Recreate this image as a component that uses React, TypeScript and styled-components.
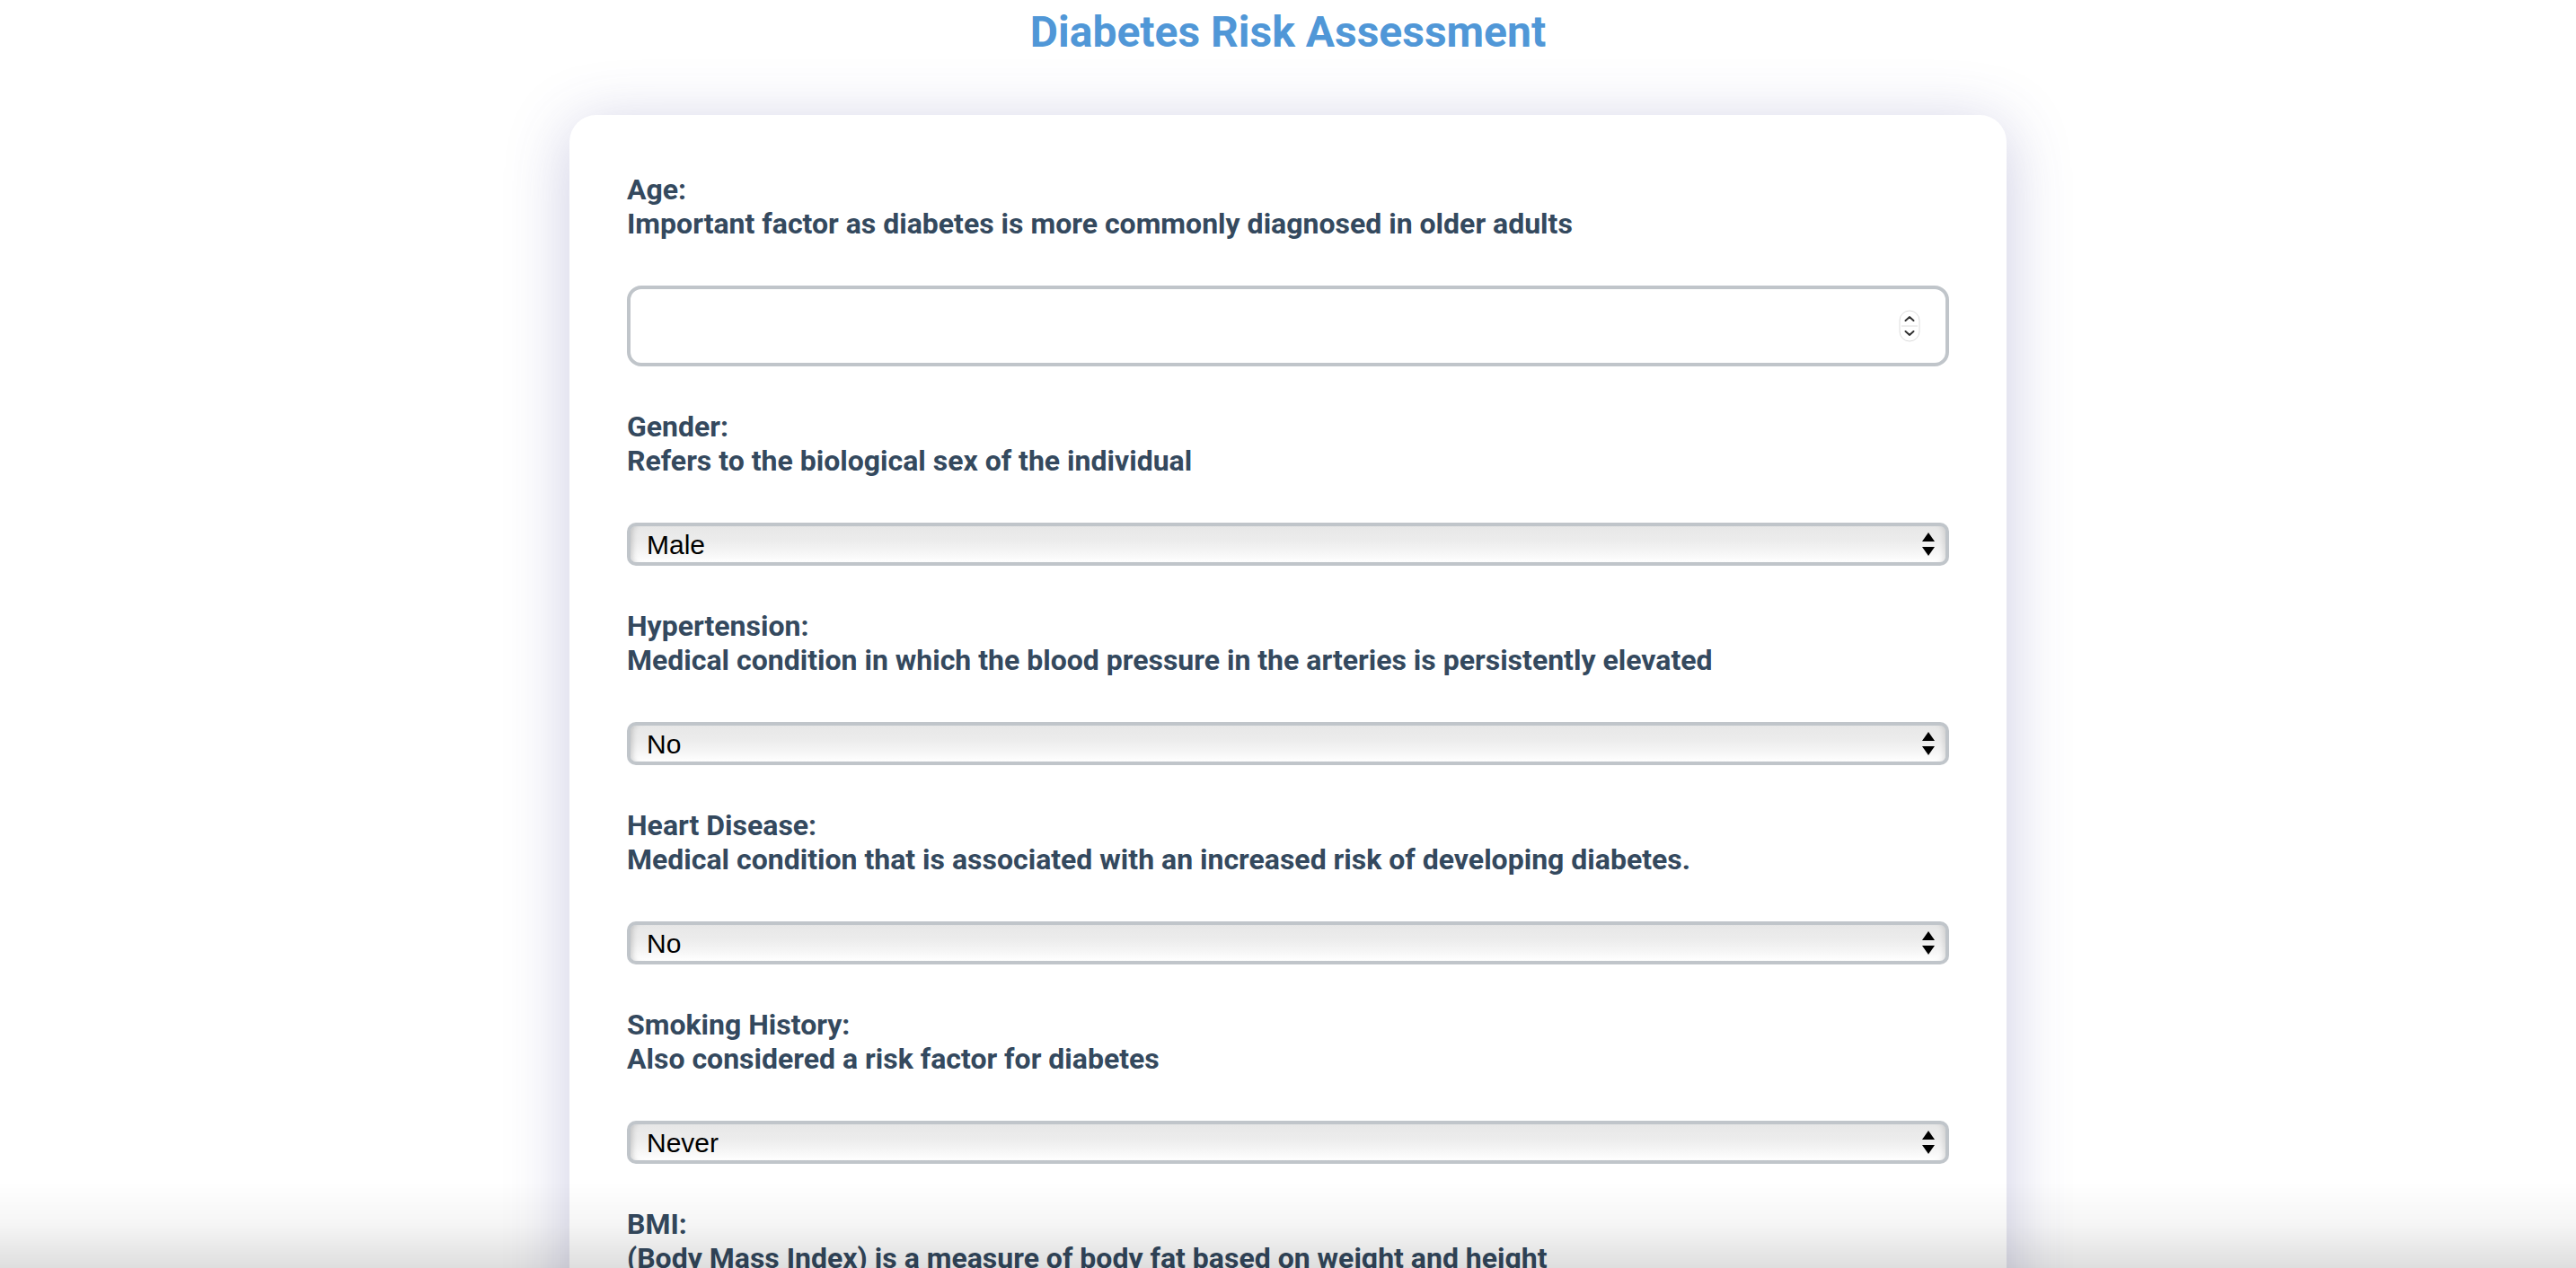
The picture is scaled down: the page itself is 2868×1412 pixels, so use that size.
import React from 'react';
import { createGlobalStyle, styled } from 'styled-components';

const GlobalStyle = createGlobalStyle`
  html, body {
    margin: 0;
    padding: 0;
    background: #ffffff;
  }
  body {
    font-family: Roboto, 'Liberation Sans', Arial, sans-serif;
  }
`;

const Page = styled.div`
  display: flex;
  flex-direction: column;
  align-items: center;
  padding-bottom: 120px;
`;

const Title = styled.h1`
  margin: 5px 0 61px;
  font-size: 48px;
  line-height: 62px;
  font-weight: 700;
  color: #5097d7;
`;

const Card = styled.form`
  width: 1600px;
  box-sizing: border-box;
  padding: 64px;
  background: #ffffff;
  border-radius: 30px;
  box-shadow: 0 12px 70px rgba(70, 70, 150, 0.28);
  display: flex;
  flex-direction: column;
`;

const Field = styled.div`
  display: flex;
  flex-direction: column;
  margin-bottom: 48px;
`;

const Label = styled.label`
  display: block;
  font-size: 32px;
  line-height: 38px;
  font-weight: 700;
  color: #34495e;
  margin-bottom: 50px;
`;

const NumberBox = styled.div`
  display: flex;
  align-items: center;
  height: 90px;
  box-sizing: border-box;
  border: 4px solid #c0c5ca;
  border-radius: 16px;
  padding: 0 28px 0 20px;
  background: #fff;
`;

const NumberInput = styled.input`
  flex: 1;
  border: none;
  outline: none;
  background: transparent;
  font-family: 'Liberation Sans', Arial, sans-serif;
  font-size: 30px;
  color: #000;
`;

const SelectBox = styled.div`
  display: flex;
  align-items: center;
  height: 48px;
  box-sizing: border-box;
  border: 4px solid #c0c5ca;
  border-radius: 10px;
  padding: 0 11px 0 18px;
  background: linear-gradient(to bottom, #e7e7e7 0%, #ececec 40%, #f6f6f6 75%, #ffffff 100%);
  box-shadow: inset 7px 0 6px -5px rgba(0, 0, 0, 0.18), inset -7px 0 6px -5px rgba(0, 0, 0, 0.12);
`;

const Select = styled.select`
  flex: 1;
  appearance: none;
  -webkit-appearance: none;
  border: none;
  outline: none;
  background: transparent;
  padding: 0;
  font-family: 'Liberation Sans', Arial, sans-serif;
  font-size: 30px;
  color: #000;
`;

const BottomShade = styled.div`
  position: fixed;
  left: 0;
  right: 0;
  bottom: 0;
  height: 96px;
  pointer-events: none;
  background: linear-gradient(to bottom, rgba(0, 0, 0, 0) 0%, rgba(0, 0, 0, 0.04) 50%, rgba(0, 0, 0, 0.13) 100%);
`;

const Spinner = () => (
  <svg width="24" height="36" viewBox="0 0 24 36">
    <rect x="1" y="1" width="22" height="34" rx="11" fill="#fff" stroke="#dcdcdc" strokeWidth="1" />
    <line x1="3" y1="18" x2="21" y2="18" stroke="#dcdcdc" strokeWidth="1" />
    <path d="M7.5 12 L12 8 L16.5 12" fill="none" stroke="#333" strokeWidth="2" strokeLinecap="round" strokeLinejoin="round" />
    <path d="M7.5 24 L12 28 L16.5 24" fill="none" stroke="#333" strokeWidth="2" strokeLinecap="round" strokeLinejoin="round" />
  </svg>
);

const SelectArrows = () => (
  <svg width="16" height="28" viewBox="0 0 16 28">
    <path d="M8 1 L15 11 L1 11 Z" fill="#000" />
    <path d="M1 17 L15 17 L8 27 Z" fill="#000" />
  </svg>
);

type Option = { value: string; label: string };

const yesNo: Option[] = [
  { value: '0', label: 'No' },
  { value: '1', label: 'Yes' },
];

const fields: {
  name: string;
  title: string;
  hint: string;
  options?: Option[];
}[] = [
  { name: 'age', title: 'Age:', hint: 'Important factor as diabetes is more commonly diagnosed in older adults' },
  {
    name: 'gender',
    title: 'Gender:',
    hint: 'Refers to the biological sex of the individual',
    options: [
      { value: 'Male', label: 'Male' },
      { value: 'Female', label: 'Female' },
    ],
  },
  {
    name: 'hypertension',
    title: 'Hypertension:',
    hint: 'Medical condition in which the blood pressure in the arteries is persistently elevated',
    options: yesNo,
  },
  {
    name: 'heart_disease',
    title: 'Heart Disease:',
    hint: 'Medical condition that is associated with an increased risk of developing diabetes.',
    options: yesNo,
  },
  {
    name: 'smoking_history',
    title: 'Smoking History:',
    hint: 'Also considered a risk factor for diabetes',
    options: [
      { value: 'never', label: 'Never' },
      { value: 'former', label: 'Former' },
      { value: 'current', label: 'Current' },
      { value: 'not current', label: 'Not current' },
      { value: 'ever', label: 'Ever' },
    ],
  },
  { name: 'bmi', title: 'BMI:', hint: '(Body Mass Index) is a measure of body fat based on weight and height' },
  {
    name: 'hba1c',
    title: 'HbA1c Level:',
    hint: 'Measure of average blood sugar level over the past 2-3 months',
  },
  {
    name: 'glucose',
    title: 'Blood Glucose Level:',
    hint: 'Amount of glucose in the bloodstream at a given time',
  },
];

const App = () => {
  return (
    <>
      <GlobalStyle />
      <Page>
        <Title>Diabetes Risk Assessment</Title>
        <Card onSubmit={(e) => e.preventDefault()}>
          {fields.map((f) => (
            <Field key={f.name}>
              <Label htmlFor={f.name}>
                {f.title}
                <br />
                {f.hint}
              </Label>
              {f.options ? (
                <SelectBox>
                  <Select id={f.name} name={f.name} defaultValue={f.options[0].value}>
                    {f.options.map((o) => (
                      <option key={o.value} value={o.value}>
                        {o.label}
                      </option>
                    ))}
                  </Select>
                  <SelectArrows />
                </SelectBox>
              ) : (
                <NumberBox>
                  <NumberInput id={f.name} name={f.name} inputMode="decimal" />
                  <Spinner />
                </NumberBox>
              )}
            </Field>
          ))}
        </Card>
      </Page>
      <BottomShade />
    </>
  );
};

export default App;
